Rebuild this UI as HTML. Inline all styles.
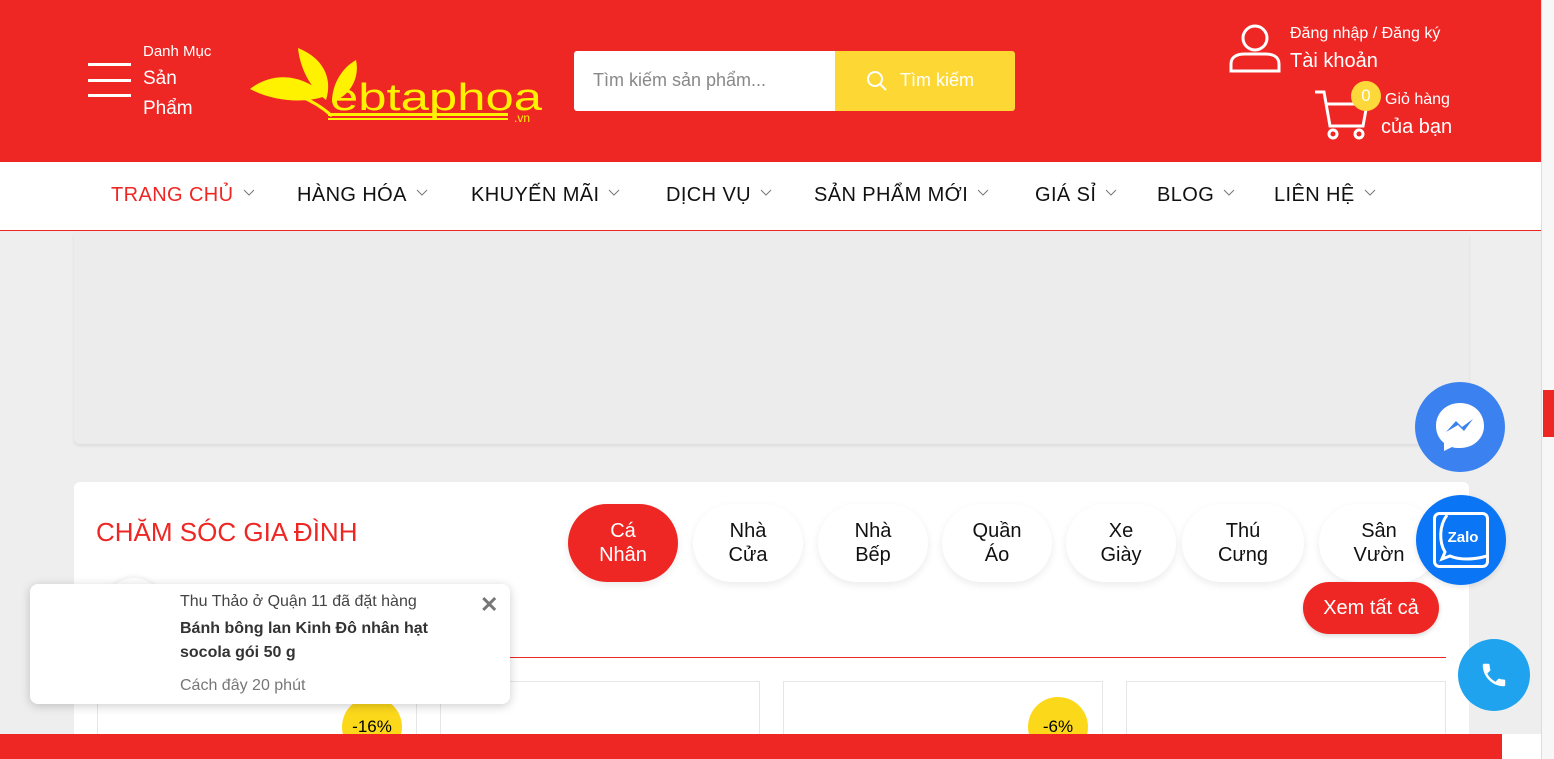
<!DOCTYPE html>
<html><head><meta charset="utf-8"><style>
*{margin:0;padding:0;box-sizing:border-box}
body{width:1554px;height:759px;overflow:hidden;background:#eee;font-family:"Liberation Sans",sans-serif;position:relative}
.abs{position:absolute}
.hdr{left:0;top:0;width:1541px;height:162px;background:#ee2724}
.nav{left:0;top:162px;width:1541px;height:69px;background:#fff;border-bottom:1px solid #ee2724}
.nav span{position:absolute;top:22px;font-size:20px;color:#111;letter-spacing:.4px;white-space:nowrap}
.nav span svg{margin-left:9px;vertical-align:middle;position:relative;top:-3px}
.w{color:#fff}
.pill{position:absolute;top:504px;width:110px;height:78px;border-radius:39px;background:#fff;box-shadow:0 3px 8px rgba(0,0,0,.08);text-align:center;font-size:20px;line-height:24px;padding-top:15px;color:#111}
.card{position:absolute;top:681px;height:60px;background:#fff;border:1px solid #e6e6e6}
.badge{position:absolute;width:60px;height:60px;border-radius:50%;background:#fcd81b;font-size:17px;text-align:center;line-height:60px}
</style></head><body>
<div class="abs hdr"></div>
<div class="abs" style="left:88px;top:63px;width:43px;height:3px;background:#fff"></div>
<div class="abs" style="left:88px;top:79px;width:43px;height:3px;background:#fff"></div>
<div class="abs" style="left:88px;top:94px;width:43px;height:3px;background:#fff"></div>
<div class="abs w" style="left:143px;top:43px;font-size:15px">Danh Mục</div>
<div class="abs w" style="left:143px;top:68px;font-size:19px">Sản</div>
<div class="abs w" style="left:143px;top:98px;font-size:19px">Phẩm</div>
<svg class="abs" style="left:248px;top:46px" width="300" height="76" viewBox="0 0 300 76">
<path d="M2 43 C25 25 55 28 78 50 C55 58 25 55 2 43Z" fill="#fff200"/>
<path d="M50 2 C75 12 85 32 78 54 C62 42 52 22 50 2Z" fill="#fff200"/>
<path d="M108 14 C112 32 102 50 84 56 C84 38 94 22 108 14Z" fill="#fff200"/>
<path d="M15 44 Q55 44 84 70" stroke="#fff200" stroke-width="3" fill="none"/>
<text x="82" y="64" font-size="38" fill="#fff200" font-family="Liberation Sans" textLength="212" lengthAdjust="spacingAndGlyphs">ebtaphoa</text>
<rect x="80" y="67" width="180" height="3" fill="#fff200"/>
<rect x="80" y="72" width="180" height="2" fill="#fff200"/>
<text x="266" y="76" font-size="12" fill="#fff200">.vn</text>
</svg>
<div class="abs" style="left:574px;top:51px;width:262px;height:60px;background:#fff;border-radius:3px 0 0 3px"></div>
<div class="abs" style="left:593px;top:70px;font-size:18px;color:#888">Tìm kiếm sản phẩm...</div>
<div class="abs" style="left:835px;top:51px;width:180px;height:60px;background:#fdd835;border-radius:0 3px 3px 0"></div>
<svg class="abs" style="left:866px;top:70px" width="22" height="22" viewBox="0 0 22 22"><circle cx="9" cy="9" r="7" stroke="#fff" stroke-width="2" fill="none"/><path d="M14 14l6 6" stroke="#fff" stroke-width="2"/></svg>
<div class="abs w" style="left:900px;top:70px;font-size:18px">Tìm kiếm</div>
<svg class="abs" style="left:1228px;top:22px" width="54" height="52" viewBox="0 0 54 52"><circle cx="27" cy="16" r="12" stroke="#fff" stroke-width="3" fill="none"/><path d="M3 49 V42 C3 34 10 32 17 32 H37 C44 32 51 34 51 42 V49 Z" stroke="#fff" stroke-width="3" fill="none"/></svg>
<div class="abs w" style="left:1290px;top:25px;font-size:16px">Đăng nhập / Đăng ký</div>
<div class="abs w" style="left:1290px;top:50px;font-size:20px">Tài khoản</div>
<svg class="abs" style="left:1313px;top:88px" width="56" height="52" viewBox="0 0 56 52"><path d="M2 4 H11 L17 38 H50 L54 16 H14" stroke="#fff" stroke-width="3" fill="none"/><circle cx="20" cy="46" r="4" stroke="#fff" stroke-width="3" fill="none"/><circle cx="46" cy="46" r="4" stroke="#fff" stroke-width="3" fill="none"/></svg>
<div class="abs" style="left:1351px;top:81px;width:30px;height:30px;border-radius:50%;background:#fcd83a;color:#fff;text-align:center;line-height:30px;font-size:17px">0</div>
<div class="abs w" style="left:1385px;top:91px;font-size:16px">Giỏ hàng</div>
<div class="abs w" style="left:1381px;top:116px;font-size:20px">của bạn</div>
<div class="abs nav">
<span style="left:111px;color:#ee2724">TRANG CHỦ<svg width="12" height="8" viewBox="0 0 12 8"><path d="M1 1l5 5 5-5" stroke="#777" fill="none"/></svg></span>
<span style="left:297px">HÀNG HÓA<svg width="12" height="8" viewBox="0 0 12 8"><path d="M1 1l5 5 5-5" stroke="#777" fill="none"/></svg></span>
<span style="left:471px">KHUYẾN MÃI<svg width="12" height="8" viewBox="0 0 12 8"><path d="M1 1l5 5 5-5" stroke="#777" fill="none"/></svg></span>
<span style="left:666px">DỊCH VỤ<svg width="12" height="8" viewBox="0 0 12 8"><path d="M1 1l5 5 5-5" stroke="#777" fill="none"/></svg></span>
<span style="left:814px">SẢN PHẨM MỚI<svg width="12" height="8" viewBox="0 0 12 8"><path d="M1 1l5 5 5-5" stroke="#777" fill="none"/></svg></span>
<span style="left:1035px">GIÁ SỈ<svg width="12" height="8" viewBox="0 0 12 8"><path d="M1 1l5 5 5-5" stroke="#777" fill="none"/></svg></span>
<span style="left:1157px">BLOG<svg width="12" height="8" viewBox="0 0 12 8"><path d="M1 1l5 5 5-5" stroke="#777" fill="none"/></svg></span>
<span style="left:1274px">LIÊN HỆ<svg width="12" height="8" viewBox="0 0 12 8"><path d="M1 1l5 5 5-5" stroke="#777" fill="none"/></svg></span>
</div>
<div class="abs" style="left:74px;top:232px;width:1395px;height:212px;background:#ececec;border-radius:0 0 6px 6px;box-shadow:0 2px 3px rgba(0,0,0,.08)"></div>
<div class="abs" style="left:74px;top:482px;width:1395px;height:277px;background:#fff;border-radius:6px"></div>
<div class="abs" style="left:96px;top:517px;font-size:26px;color:#ee2724">CHĂM SÓC GIA ĐÌNH</div>
<div class="abs" style="left:104px;top:578px;width:60px;height:30px;border-radius:30px 30px 0 0;background:#fff;box-shadow:0 -2px 4px rgba(0,0,0,.06)"></div>
<div class="pill" style="left:568px;background:#ee2724;color:#fff">Cá<br>Nhân</div>
<div class="pill" style="left:693px">Nhà<br>Cửa</div>
<div class="pill" style="left:818px">Nhà<br>Bếp</div>
<div class="pill" style="left:942px">Quần<br>Áo</div>
<div class="pill" style="left:1066px">Xe<br>Giày</div>
<div class="pill" style="left:1182px;width:122px">Thú<br>Cưng</div>
<div class="pill" style="left:1319px;width:120px">Sân<br>Vườn</div>
<div class="abs" style="left:1303px;top:582px;width:136px;height:52px;border-radius:26px;background:#ee2724;color:#fff;font-size:20px;text-align:center;line-height:52px;box-shadow:0 2px 5px rgba(0,0,0,.15)">Xem tất cả</div>
<div class="abs" style="left:96px;top:657px;width:1350px;height:1px;background:#ee2724"></div>
<div class="card" style="left:97px;width:320px"></div>
<div class="card" style="left:440px;width:320px"></div>
<div class="card" style="left:783px;width:320px"></div>
<div class="card" style="left:1126px;width:320px"></div>
<div class="badge" style="left:342px;top:697px">-16%</div>
<div class="badge" style="left:1028px;top:697px">-6%</div>
<div class="abs" style="left:30px;top:584px;width:480px;height:120px;background:#fff;border-radius:8px;box-shadow:0 2px 10px rgba(0,0,0,.2)"></div>
<div class="abs" style="left:180px;top:593px;font-size:16px;color:#444">Thu Thảo ở Quận 11 đã đặt hàng</div>
<div class="abs" style="left:180px;top:617px;font-size:16px;color:#333;font-weight:bold;line-height:24px">Bánh bông lan Kinh Đô nhân hạt<br>socola gói 50 g</div>
<div class="abs" style="left:180px;top:677px;font-size:16px;color:#777">Cách đây 20 phút</div>
<div class="abs" style="left:480px;top:592px;font-size:22px;color:#777;font-weight:bold">✕</div>
<div class="abs" style="left:1415px;top:382px;width:90px;height:90px;border-radius:50%;background:#3b82f0"></div>
<svg class="abs" style="left:1432px;top:399px" width="56" height="56" viewBox="0 0 56 56"><path d="M28 4 C14 4 4 14 4 27 C4 34 7 40 12 44 V52 L20 48 C22 49 25 49 28 49 C42 49 52 39 52 27 C52 14 42 4 28 4Z" fill="#fff"/><path d="M14 33 L24 22 L30 28 L41 20 L32 32 L26 26 Z" fill="#3b82f0"/></svg>
<div class="abs" style="left:1416px;top:495px;width:90px;height:90px;border-radius:50%;background:#0a76f6;box-shadow:0 2px 6px rgba(0,0,0,.1)"></div>
<svg class="abs" style="left:1433px;top:512px" width="56" height="56" viewBox="0 0 56 56"><rect x="1.5" y="1.5" width="53" height="53" rx="5" fill="none" stroke="#fff" stroke-width="3"/><path d="M14 3 C6 14 6 30 12 40 L9 47 L17 44 C26 48 40 48 54 44" fill="none" stroke="#fff" stroke-width="3"/><text x="30" y="30" font-size="15" font-weight="bold" fill="#fff" text-anchor="middle" font-family="Liberation Sans">Zalo</text></svg>
<div class="abs" style="left:1458px;top:639px;width:72px;height:72px;border-radius:50%;background:#1fa3ee"></div>
<svg class="abs" style="left:1479px;top:660px" width="30" height="30" viewBox="0 0 24 24"><path d="M6.6 10.8c1.4 2.8 3.8 5.1 6.6 6.6l2.2-2.2c.3-.3.7-.4 1-.2 1.1.4 2.3.6 3.6.6.6 0 1 .4 1 1V20c0 .6-.4 1-1 1C10.6 21 3 13.4 3 4c0-.6.4-1 1-1h3.5c.6 0 1 .4 1 1 0 1.3.2 2.5.6 3.6.1.3 0 .7-.2 1z" fill="#fff"/></svg>
<div class="abs" style="left:1541px;top:0;width:13px;height:759px;background:#f7f7f7;border-left:1px solid #ddd"></div>
<div class="abs" style="left:1543px;top:390px;width:11px;height:47px;background:#ee2724"></div>
<div class="abs" style="left:0;top:734px;width:1502px;height:25px;background:#ee2724"></div>
<div class="abs" style="left:1502px;top:734px;width:39px;height:25px;background:#fff"></div>
</body></html>
